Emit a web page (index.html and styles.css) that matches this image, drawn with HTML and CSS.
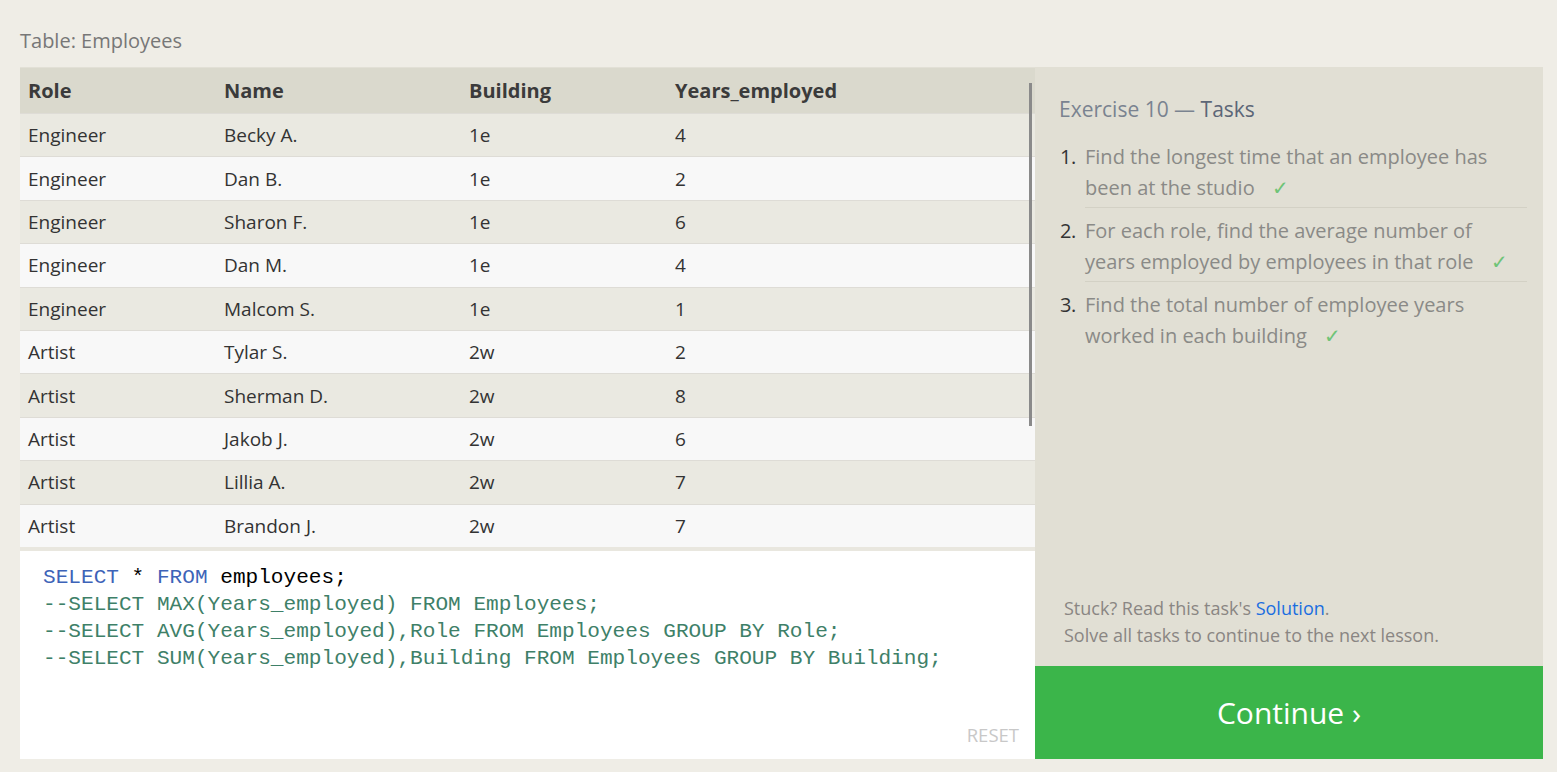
FILE: index.html
```html
<!DOCTYPE html>
<html>
<head>
<meta charset="utf-8">
<link rel="stylesheet" href="styles.css">
</head>
<body>
<div class="page">
  <div class="caption">Table: Employees</div>
  <div class="main">
    <div class="left">
      <div class="table-wrap">
        <table class="data">
          <thead>
            <tr><th class="c1">Role</th><th class="c2">Name</th><th class="c3">Building</th><th>Years_employed</th></tr>
          </thead>
          <tbody>
            <tr><td>Engineer</td><td>Becky A.</td><td>1e</td><td>4</td></tr>
            <tr><td>Engineer</td><td>Dan B.</td><td>1e</td><td>2</td></tr>
            <tr><td>Engineer</td><td>Sharon F.</td><td>1e</td><td>6</td></tr>
            <tr><td>Engineer</td><td>Dan M.</td><td>1e</td><td>4</td></tr>
            <tr><td>Engineer</td><td>Malcom S.</td><td>1e</td><td>1</td></tr>
            <tr><td>Artist</td><td>Tylar S.</td><td>2w</td><td>2</td></tr>
            <tr><td>Artist</td><td>Sherman D.</td><td>2w</td><td>8</td></tr>
            <tr><td>Artist</td><td>Jakob J.</td><td>2w</td><td>6</td></tr>
            <tr><td>Artist</td><td>Lillia A.</td><td>2w</td><td>7</td></tr>
            <tr><td>Artist</td><td>Brandon J.</td><td>2w</td><td>7</td></tr>
            <tr><td>Manager</td><td>Scott K.</td><td>1e</td><td>9</td></tr>
            <tr><td>Manager</td><td>Shirlee M.</td><td>1e</td><td>3</td></tr>
            <tr><td>Manager</td><td>Daria O.</td><td>2w</td><td>6</td></tr>
          </tbody>
        </table>
        <div class="scroll-thumb"></div>
      </div>
      <div class="editor">
        <div class="code">
          <div class="line"><span class="kw">SELECT</span> * <span class="kw">FROM</span> employees;</div>
          <div class="line cm">--SELECT MAX(Years_employed) FROM Employees;</div>
          <div class="line cm">--SELECT AVG(Years_employed),Role FROM Employees GROUP BY Role;</div>
          <div class="line cm">--SELECT SUM(Years_employed),Building FROM Employees GROUP BY Building;</div>
        </div>
        <div class="reset">RESET</div>
      </div>
    </div>
    <div class="right">
      <div class="tasks">
        <div class="tasks-title"><span class="ex">Exercise 10 — </span>Tasks</div>
        <ol class="task-list">
          <li><span class="num">1.</span><span class="txt">Find the longest time that an employee has been at the studio <span class="check">✓</span></span></li>
          <li><span class="num">2.</span><span class="txt">For each role, find the average number of years employed by employees in that role <span class="check">✓</span></span></li>
          <li><span class="num">3.</span><span class="txt">Find the total number of employee years worked in each building <span class="check">✓</span></span></li>
        </ol>
        <div class="stuck">
          <div>Stuck? Read this task's <a class="sol">Solution</a>.</div>
          <div>Solve all tasks to continue to the next lesson.</div>
        </div>
      </div>
      <div class="continue">Continue ›</div>
    </div>
  </div>
</div>
</body>
</html>
```

FILE: styles.css
```css
html, body {
  margin: 0;
  padding: 0;
}
body {
  background: #efede6;
  font-family: "Open Sans", "Noto Sans", sans-serif;
  color: #333;
}
.page {
  padding: 28px 14px 13px 20px;
}
.caption {
  font-size: 20px;
  color: #777;
  line-height: 26px;
  height: 26px;
  margin-bottom: 13px;
}
.main {
  display: flex;
  height: 692px;
}
.left {
  width: 1015px;
  display: flex;
  flex-direction: column;
}
.table-wrap {
  flex: none;
  position: relative;
  height: 479px;
  overflow: hidden;
  border-top: 1px solid #e2e0d6;
  border-bottom: 4px solid #e9e7df;
  background: #f8f8f8;
}
.data {
  width: 100%;
  border-collapse: collapse;
  font-size: 19px;
}
.data th {
  background: #dad9cd;
  height: 45px;
  text-align: left;
  font-weight: 700;
  color: #3b3b3b;
  padding: 0 0 0 8px;
  font-size: 20px;
}
.data th.c1 { width: 188px; }
.data th.c2 { width: 237px; }
.data th.c3 { width: 198px; }
.data td {
  height: 42.4px;
  padding: 0 0 0 8px;
  border-top: 1px solid #dedcd6;
  color: #333;
}
.data tbody tr:nth-child(odd) td { background: #eae9e1; }
.data tbody tr:nth-child(even) td { background: #f8f8f8; }
.scroll-thumb {
  position: absolute;
  right: 3px;
  top: 15px;
  width: 3px;
  height: 343px;
  background: #8a8a8a;
}
.editor {
  flex: 1;
  background: #fff;
  position: relative;
  padding: 13px 23px 0 23px;
}
.code {
  font-family: "Liberation Mono", "DejaVu Sans Mono", monospace;
  font-size: 21.1px;
  line-height: 27px;
  color: #000;
}
.code .line { white-space: pre; }
.code .kw { color: #3d63b8; }
.code .cm { color: #3e8068; }
.reset {
  position: absolute;
  right: 16px;
  bottom: 12px;
  color: #c8c8c8;
  font-size: 18.5px;
}
.right {
  width: 508px;
  display: flex;
  flex-direction: column;
  background: #e1dfd4;
}
.tasks {
  flex: 1;
  padding: 28px 16px 0 24px;
  display: flex;
  flex-direction: column;
}
.tasks-title {
  font-size: 21px;
  color: #5c6677;
  line-height: 28px;
}
.tasks-title .ex { color: #7a8390; }
.task-list {
  list-style: none;
  margin: 18px 0 0 0;
  padding: 0;
}
.task-list li {
  display: flex;
  font-size: 20px;
  line-height: 31px;
  color: #8a8a87;
}
.task-list .num {
  width: 25px;
  color: #333;
  flex: none;
  padding-left: 1px;
  letter-spacing: -0.5px;
}
.task-list .txt {
  flex: 1;
  padding-bottom: 4px;
  border-bottom: 1px solid #d3d1c5;
  margin-bottom: 7px;
}
.task-list li:last-child .txt {
  border-bottom: none;
}
.check {
  color: #6fc477;
  margin-left: 12px;
}
.stuck {
  margin-top: auto;
  margin-bottom: 17px;
  padding-left: 5px;
  font-size: 18px;
  line-height: 27px;
  color: #8a8683;
}
.sol { color: #1a6ee0; }
.continue {
  height: 93px;
  background: #3bb54a;
  color: #fff;
  font-size: 30px;
  display: flex;
  align-items: center;
  justify-content: center;
}
```
